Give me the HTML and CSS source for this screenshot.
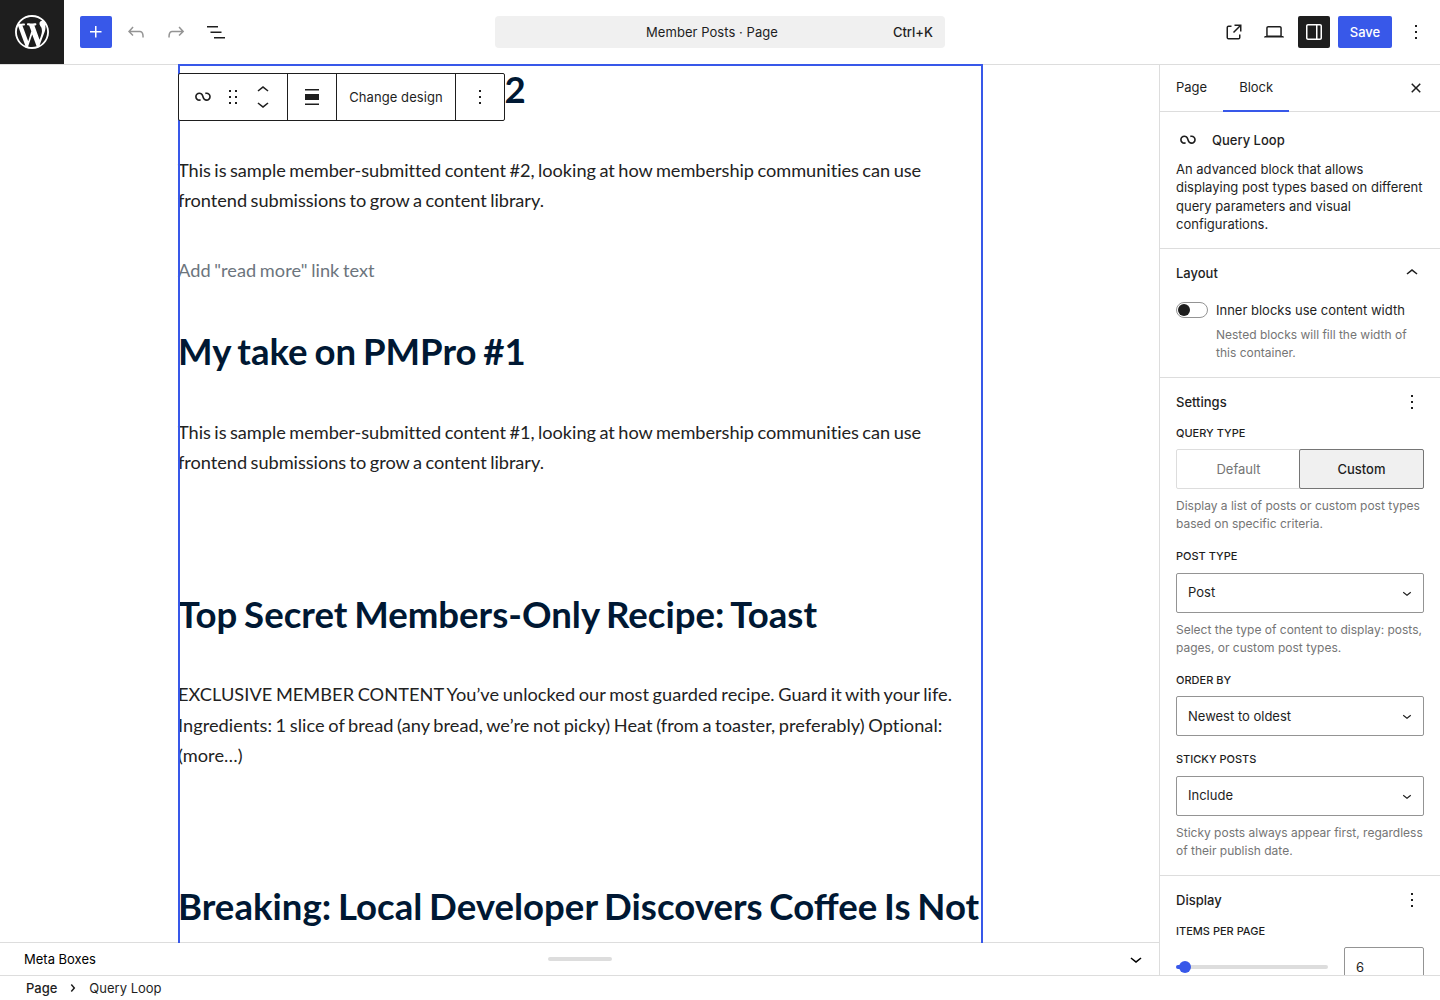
FILE: index.html
```html
<!DOCTYPE html>
<html lang="en">
<head>
<meta charset="utf-8">
<title>Member Posts · Page</title>
<link rel="stylesheet" href="styles.css">
</head>
<body>
<header class="header">
  <a class="logo"><svg width="34" height="34" viewBox="0 0 20 20"><path d="M20 10c0-5.51-4.49-10-10-10C4.48 0 0 4.49 0 10c0 5.52 4.48 10 10 10 5.51 0 10-4.48 10-10zM7.78 15.37L4.37 6.22c.55-.02 1.17-.08 1.17-.08.5-.06.44-1.13-.06-1.11 0 0-1.45.11-2.37.11-.18 0-.37 0-.58-.01C4.12 2.69 6.87 1.11 10 1.11c2.33 0 4.45.87 6.05 2.34-.68-.11-1.65.39-1.65 1.58 0 .74.45 1.36.9 2.1.35.61.55 1.36.55 2.46 0 1.49-1.4 5-1.4 5l-3.03-8.37c.54-.02.82-.17.82-.17.5-.05.44-1.25-.06-1.22 0 0-1.44.12-2.38.12-.87 0-2.33-.12-2.33-.12-.5-.03-.56 1.2-.06 1.22l.92.08 1.26 3.41zM17.41 10c.24-.64.74-1.87.43-4.25.7 1.29 1.05 2.71 1.05 4.25 0 3.29-1.73 6.24-4.4 7.78.97-2.59 1.94-5.2 2.92-7.78zM6.1 18.09C3.12 16.65 1.11 13.53 1.11 10c0-1.3.23-2.48.72-3.59C3.25 10.3 4.67 14.2 6.1 18.09zm4.03-6.63l2.58 6.98c-.86.29-1.76.45-2.71.45-.79 0-1.57-.11-2.29-.33.81-2.38 1.62-4.74 2.42-7.1z"/></svg></a>
  <div class="tools">
    <button class="btn primary"><svg class="icon" viewBox="0 0 24 24"><path d="M11 12.5V17.5H12.5V12.5H17.5V11H12.5V6H11V11H6V12.5H11Z"/></svg></button>
    <button class="btn disabled"><svg class="icon" viewBox="0 0 24 24"><path d="M18.3 11.7c-.6-.6-1.4-.9-2.3-.9H6.7l2.9-3.3-1.1-1-4.5 5L8.5 16l1-1-2.7-2.7H16c.5 0 .9.2 1.3.5 1 1 1 3.4 1 4.5v.3h1.5v-.2c0-1.5 0-4.3-1.5-5.7z"/></svg></button>
    <button class="btn disabled"><svg class="icon" viewBox="0 0 24 24"><path d="M15.6 6.5l-1.1 1 2.9 3.3H8c-.9 0-1.7.3-2.3.9-1.4 1.5-1.4 4.2-1.4 5.6v.2h1.5v-.3c0-1.1 0-3.5 1-4.5.3-.3.7-.5 1.3-.5h9.2L14.5 15l1.1 1.1 4.6-4.6-4.6-5z"/></svg></button>
    <button class="btn"><svg class="icon" viewBox="0 0 24 24"><path d="M3 6h11v1.5H3V6Zm3.5 5.5h11V13h-11v-1.5ZM21 17H10v1.5h11V17Z"/></svg></button>
  </div>
  <div class="command"><span></span><span class="title">Member Posts · Page</span><span class="shortcut">Ctrl+K</span></div>
  <div class="tools end">
    <button class="btn"><svg class="icon" viewBox="0 0 24 24"><path d="M19.5 4.5h-7V6h4.44l-5.97 5.97 1.06 1.06L18 7.06v4.44h1.5v-7Zm-13 1a2 2 0 0 0-2 2v10a2 2 0 0 0 2 2h10a2 2 0 0 0 2-2v-3H17v3a.5.5 0 0 1-.5.5h-10a.5.5 0 0 1-.5-.5v-10a.5.5 0 0 1 .5-.5h3V5.5h-3Z"/></svg></button>
    <button class="btn"><svg class="icon" viewBox="0 0 24 24"><path d="M20.5 16h-.7V8c0-1.1-.9-2-2-2H6.2c-1.1 0-2 .9-2 2v8h-.7c-.8 0-1.5.7-1.5 1.5h20c0-.8-.7-1.5-1.5-1.5zM5.7 8c0-.3.2-.5.5-.5h11.6c.3 0 .5.2.5.5v7.6H5.7V8z"/></svg></button>
    <button class="btn pressed"><svg class="icon" viewBox="0 0 24 24"><path d="M18 4H6c-1.1 0-2 .9-2 2v12c0 1.1.9 2 2 2h12c1.1 0 2-.9 2-2V6c0-1.1-.9-2-2-2zm-4 14.5H6c-.3 0-.5-.2-.5-.5V6c0-.3.2-.5.5-.5h8v13zm4.5-.5c0 .3-.2.5-.5.5h-2.5v-13H18c.3 0 .5.2.5.5v12z"/></svg></button>
    <button class="btn primary save">Save</button>
    <button class="btn"><svg class="icon" viewBox="0 0 24 24"><path d="M13 19h-2v-2h2v2zm0-6h-2v-2h2v2zm0-6h-2V5h2v2z"/></svg></button>
  </div>
</header>
<div class="body">
  <main class="editor">
    <div class="canvas">
      <div class="query">
        <article class="post">
          <h2>My take on PMPro #2</h2>
          <p>This is sample member-submitted content #2, looking at how membership communities can use frontend submissions to grow a content library.</p>
          <div class="more">Add "read more" link text</div>
        </article>
        <article class="post">
          <h2>My take on PMPro #1</h2>
          <p>This is sample member-submitted content #1, looking at how membership communities can use frontend submissions to grow a content library.</p>
          <div class="more"></div>
        </article>
        <article class="post">
          <h2>Top Secret Members-Only Recipe: Toast</h2>
          <p class="loose">EXCLUSIVE MEMBER CONTENT You’ve unlocked our most guarded recipe. Guard it with your life. Ingredients: 1 slice of bread (any bread, we’re not picky) Heat (from a toaster, preferably) Optional: (more…)</p>
          <div class="more"></div>
        </article>
        <article class="post">
          <h2>Breaking: Local Developer Discovers Coffee Is Not</h2>
        </article>
      </div>
      <div class="toolbar">
        <div class="group first">
          <svg class="icon" viewBox="0 0 24 24"><path d="M18.1823 11.6392C18.1823 13.0804 17.0139 14.2487 15.5727 14.2487C14.3579 14.2487 13.335 13.4179 13.0453 12.2922L13.0377 12.2625L13.0278 12.2335L12.3985 10.377L12.3942 10.3785C11.8571 8.64997 10.246 7.39405 8.33961 7.39405C5.99509 7.39405 4.09448 9.29465 4.09448 11.6392C4.09448 13.9837 5.99509 15.8843 8.33961 15.8843C8.88499 15.8843 9.40822 15.781 9.88943 15.5923L9.29212 14.0697C8.99812 14.185 8.67729 14.2487 8.33961 14.2487C6.89838 14.2487 5.73003 13.0804 5.73003 11.6392C5.73003 10.1979 6.89838 9.02959 8.33961 9.02959C9.55444 9.02959 10.5773 9.86046 10.867 10.9862L10.8772 10.9836L11.4695 12.7311C11.9515 14.546 13.6048 15.8843 15.5727 15.8843C17.9172 15.8843 19.8178 13.9837 19.8178 11.6392C19.8178 9.29465 17.9172 7.39404 15.5727 7.39404C15.0287 7.39404 14.5066 7.4968 14.0264 7.6847L14.6223 9.20781C14.9158 9.093 15.2358 9.02959 15.5727 9.02959C17.0139 9.02959 18.1823 10.1979 18.1823 11.6392Z"/></svg>
          <svg class="icon drag" viewBox="0 0 24 24"><path d="M8 7h2V5H8v2zm0 6h2v-2H8v2zm0 6h2v-2H8v2zm6-14v2h2V5h-2zm0 8h2v-2h-2v2zm0 6h2v-2h-2v2z"/></svg>
          <div class="movers">
            <svg class="icon" viewBox="0 0 24 24"><path d="M6.5 12.4L12 8l5.5 4.4-.9 1.2L12 10l-4.5 3.6-1-1.2z"/></svg>
            <svg class="icon" viewBox="0 0 24 24"><path d="M17.5 11.6L12 16l-5.5-4.4.9-1.2L12 14l4.5-3.6 1 1.2z"/></svg>
          </div>
        </div>
        <div class="group align"><svg class="icon" viewBox="0 0 24 24"><path d="M19 5.5H5V4h14v1.5ZM19 20H5v-1.5h14V20ZM5 9h14v6H5V9Z"/></svg></div>
        <div class="group design">Change design</div>
        <div class="group options"><svg class="icon" viewBox="0 0 24 24"><path d="M13 19h-2v-2h2v2zm0-6h-2v-2h2v2zm0-6h-2V5h2v2z"/></svg></div>
      </div>
    </div>
    <div class="metaboxes"><span>Meta Boxes</span><i class="handle"></i><svg class="icon" viewBox="0 0 24 24"><path d="M17.5 11.6L12 16l-5.5-4.4.9-1.2L12 14l4.5-3.6 1 1.2z"/></svg></div>
  </main>
  <aside class="sidebar">
    <div class="tabs"><span class="tab">Page</span><span class="tab active">Block</span><svg class="icon" viewBox="0 0 24 24"><path d="M12 13.06l3.712 3.713 1.061-1.06L13.061 12l3.712-3.712-1.06-1.06L12 10.938 8.288 7.227l-1.061 1.06L10.939 12l-3.712 3.712 1.06 1.061L12 13.061z"/></svg></div>
    <section class="card">
      <div class="card-title"><svg class="icon" viewBox="0 0 24 24"><path d="M18.1823 11.6392C18.1823 13.0804 17.0139 14.2487 15.5727 14.2487C14.3579 14.2487 13.335 13.4179 13.0453 12.2922L13.0377 12.2625L13.0278 12.2335L12.3985 10.377L12.3942 10.3785C11.8571 8.64997 10.246 7.39405 8.33961 7.39405C5.99509 7.39405 4.09448 9.29465 4.09448 11.6392C4.09448 13.9837 5.99509 15.8843 8.33961 15.8843C8.88499 15.8843 9.40822 15.781 9.88943 15.5923L9.29212 14.0697C8.99812 14.185 8.67729 14.2487 8.33961 14.2487C6.89838 14.2487 5.73003 13.0804 5.73003 11.6392C5.73003 10.1979 6.89838 9.02959 8.33961 9.02959C9.55444 9.02959 10.5773 9.86046 10.867 10.9862L10.8772 10.9836L11.4695 12.7311C11.9515 14.546 13.6048 15.8843 15.5727 15.8843C17.9172 15.8843 19.8178 13.9837 19.8178 11.6392C19.8178 9.29465 17.9172 7.39404 15.5727 7.39404C15.0287 7.39404 14.5066 7.4968 14.0264 7.6847L14.6223 9.20781C14.9158 9.093 15.2358 9.02959 15.5727 9.02959C17.0139 9.02959 18.1823 10.1979 18.1823 11.6392Z"/></svg><span>Query Loop</span></div>
      <p class="desc">An advanced block that allows displaying post types based on different query parameters and visual configurations.</p>
    </section>
    <section class="panel layout">
      <div class="panel-head"><span>Layout</span><svg class="icon" viewBox="0 0 24 24"><path d="M6.5 12.4L12 8l5.5 4.4-.9 1.2L12 10l-4.5 3.6-1-1.2z"/></svg></div>
      <div class="toggle-row"><span class="toggle"></span><span>Inner blocks use content width</span></div>
      <p class="help indent">Nested blocks will fill the width of this container.</p>
    </section>
    <section class="panel settings">
      <div class="panel-head"><span>Settings</span><svg class="icon" viewBox="0 0 24 24"><path d="M13 19h-2v-2h2v2zm0-6h-2v-2h2v2zm0-6h-2V5h2v2z"/></svg></div>
      <div class="field">
        <div class="label">Query type</div>
        <div class="segmented"><span>Default</span><span class="on">Custom</span></div>
        <p class="help">Display a list of posts or custom post types based on specific criteria.</p>
      </div>
      <div class="field">
        <div class="label">Post type</div>
        <div class="select"><span>Post</span><svg width="18" height="18" viewBox="0 0 24 24"><path d="M17.5 11.6L12 16l-5.5-4.4.9-1.2L12 14l4.5-3.6 1 1.2z"/></svg></div>
        <p class="help">Select the type of content to display: posts, pages, or custom post types.</p>
      </div>
      <div class="field">
        <div class="label">Order by</div>
        <div class="select"><span>Newest to oldest</span><svg width="18" height="18" viewBox="0 0 24 24"><path d="M17.5 11.6L12 16l-5.5-4.4.9-1.2L12 14l4.5-3.6 1 1.2z"/></svg></div>
      </div>
      <div class="field">
        <div class="label">Sticky posts</div>
        <div class="select"><span>Include</span><svg width="18" height="18" viewBox="0 0 24 24"><path d="M17.5 11.6L12 16l-5.5-4.4.9-1.2L12 14l4.5-3.6 1 1.2z"/></svg></div>
        <p class="help">Sticky posts always appear first, regardless of their publish date.</p>
      </div>
    </section>
    <section class="panel">
      <div class="panel-head"><span>Display</span><svg class="icon" viewBox="0 0 24 24"><path d="M13 19h-2v-2h2v2zm0-6h-2v-2h2v2zm0-6h-2V5h2v2z"/></svg></div>
      <div class="label">Items per page</div>
      <div class="range"><div class="track"><i class="thumb"></i></div><div class="number">6</div></div>
    </section>
  </aside>
</div>
<footer class="footer"><span class="crumb">Page</span><svg class="icon" viewBox="0 0 24 24"><path d="M10.8622 8.04053L14.2805 12.0286L10.8622 16.0167L9.72327 15.0405L12.3049 12.0286L9.72327 9.01672L10.8622 8.04053Z"/></svg><span>Query Loop</span></footer>
</body>
</html>
```
FILE: styles.css
```css
* { box-sizing: border-box; }
body {
  margin: 0;
  width: 1440px;
  height: 1000px;
  overflow: hidden;
  display: flex;
  flex-direction: column;
  background: #fff;
  color: #1e1e1e;
  font: 13px/1.4 Inter, sans-serif;
}
p, h2 { margin: 0; }
svg { display: block; flex: none; fill: currentColor; }
.icon { width: 24px; height: 24px; }

.header {
  height: 65px;
  flex: none;
  display: grid;
  grid-template-columns: 64px 431px 450px 1fr;
  align-items: center;
  border-bottom: 1px solid #ddd;
}
.logo {
  width: 64px;
  height: 64px;
  display: flex;
  align-items: center;
  justify-content: center;
  background: #1e1e1e;
  color: #fff;
}
.tools { display: flex; gap: 8px; padding-left: 16px; }
.tools.end { justify-content: flex-end; padding: 0 8px 0 0; }
.btn {
  width: 32px;
  height: 32px;
  padding: 0;
  border: 0;
  border-radius: 2px;
  background: none;
  color: inherit;
  display: flex;
  align-items: center;
  justify-content: center;
  font: 500 13px/1.4 Inter, sans-serif;
}
.btn.disabled { color: #949494; }
.btn.primary { background: #3858e9; color: #fff; }
.btn.pressed { background: #1e1e1e; color: #fff; }
.btn.save { width: 54px; }
.command {
  height: 32px;
  display: grid;
  grid-template-columns: 1fr auto 1fr;
  align-items: center;
  padding-right: 12px;
  border-radius: 4px;
  background: #f0f0f0;
}
.title { margin-right: 4px; letter-spacing: 0.05px; }
.shortcut { text-align: right; font-weight: 500; }

.body { flex: 1; min-height: 0; display: flex; }
.editor { width: 1159px; flex: none; display: flex; flex-direction: column; }
.canvas {
  position: relative;
  z-index: 1;
  flex: 1;
  min-height: 0;
  margin: -1px 0;
  overflow: hidden;
  padding: 0 176px 0 178px;
}
.query {
  position: relative;
  height: 100%;
  display: flex;
  flex-direction: column;
  color: #222;
  font: 18.2px/30.35px Lato, sans-serif;
  font-variant-ligatures: none;
  word-spacing: -1.1px;
}
.query::after {
  content: "";
  position: absolute;
  inset: 0 0 -10px;
  border: 2px solid #3858e9;
}
.post { margin-bottom: 40.75px; }
.post h2 {
  margin-bottom: 39.6px;
  color: #001833;
  font: 700 36.6px/51px Lato, sans-serif;
  white-space: nowrap;
  word-spacing: -2.1px;
}
.post p { letter-spacing: -0.04px; }
.post p.loose { letter-spacing: 0.04px; }
.more { margin-top: 40px; min-height: 30.35px; color: #6c757d; letter-spacing: 0.04px; }
.toolbar {
  position: absolute;
  left: 178px;
  top: 9px;
  display: flex;
  height: 48px;
  background: #fff;
  border: 1px solid #1e1e1e;
  border-radius: 2px;
}
.group { display: flex; align-items: center; justify-content: center; }
.group + .group { border-left: 1px solid #1e1e1e; }
.group.first { width: 108px; padding-left: 12px; justify-content: flex-start; }
.drag { margin-left: 6px; }
.movers { display: flex; flex-direction: column; margin-left: 6px; }
.movers .icon { margin: -5px 0; }
.align { width: 49px; }
.design { width: 119px; letter-spacing: 0.07px; }
.options { width: 49px; }

.metaboxes {
  height: 33px;
  flex: none;
  display: grid;
  grid-template-columns: 1fr 64px 1fr;
  align-items: center;
  padding: 0 24px;
  border-top: 1px solid #ddd;
  color: #000;
}
.handle { height: 4px; border-radius: 4px; background: #ddd; }
.metaboxes .icon { justify-self: end; margin-right: -13px; }

.sidebar { flex: 1; border-left: 1px solid #ddd; overflow: hidden; }
.tabs {
  height: 47px;
  display: flex;
  align-items: center;
  border-bottom: 1px solid #ddd;
  padding-right: 12px;
}
.tab { height: 47px; padding: 13px 16px 0; }
.tab.active { border-bottom: 2px solid #3858e9; }
.tabs .icon { margin-left: auto; }
.card { height: 136px; padding: 16px 16px 0; }
.card-title { display: flex; align-items: center; gap: 12px; font-weight: 500; }
.desc { margin-top: 8.2px; }
.panel { border-top: 1px solid #ddd; padding: 0 16px; }
.panel.layout { height: 129px; }
.panel.settings { height: 498px; }
.panel-head {
  height: 48px;
  display: flex;
  align-items: center;
  justify-content: space-between;
  font-weight: 500;
}
.toggle-row { display: flex; align-items: center; gap: 8px; height: 26px; }
.toggle {
  width: 32px;
  height: 16px;
  padding: 1px;
  border: 1px solid #949494;
  border-radius: 8px;
}
.toggle::before {
  content: "";
  display: block;
  width: 12px;
  height: 12px;
  border-radius: 50%;
  background: #1e1e1e;
}
.help { color: #757575; font-size: 12px; line-height: 18px; }
.help.indent { margin: 3px 0 0 40px; }
.label {
  height: 23.4px;
  font-size: 11px;
  font-weight: 500;
  line-height: 15.4px;
  text-transform: uppercase;
}
.field { margin-bottom: 16px; }
.field .help { margin-top: 8px; }
.segmented { display: flex; height: 40px; border: 1px solid #ddd; border-radius: 2px; }
.segmented span {
  width: 123px;
  display: flex;
  align-items: center;
  justify-content: center;
  color: #757575;
}
.segmented .on {
  width: 125px;
  margin: -1px;
  background: #f0f0f0;
  border: 1px solid #757575;
  border-radius: 2px;
  color: #1e1e1e;
  font-weight: 500;
}
.select {
  height: 40px;
  display: flex;
  align-items: center;
  justify-content: space-between;
  padding: 0 7px 1px 11px;
  border: 1px solid #949494;
  border-radius: 2px;
}
.select svg { margin-top: 1px; }
.range { display: flex; align-items: center; gap: 16px; }
.track { width: 152px; height: 4px; border-radius: 4px; background: linear-gradient(to right, #3858e9 8px, #ddd 8px); }
.thumb {
  display: block;
  width: 12px;
  height: 12px;
  margin: -4px 0 0 2.5px;
  border-radius: 50%;
  background: #3858e9;
}
.number { width: 80px; height: 40px; padding: 10px 11px; border: 1px solid #949494; border-radius: 2px; }

.footer {
  height: 25px;
  flex: none;
  display: flex;
  align-items: center;
  padding-left: 26px;
  border-top: 1px solid #ddd;
}
.footer .icon { margin: 0 4px; }
.crumb { font-weight: 500; }
```
